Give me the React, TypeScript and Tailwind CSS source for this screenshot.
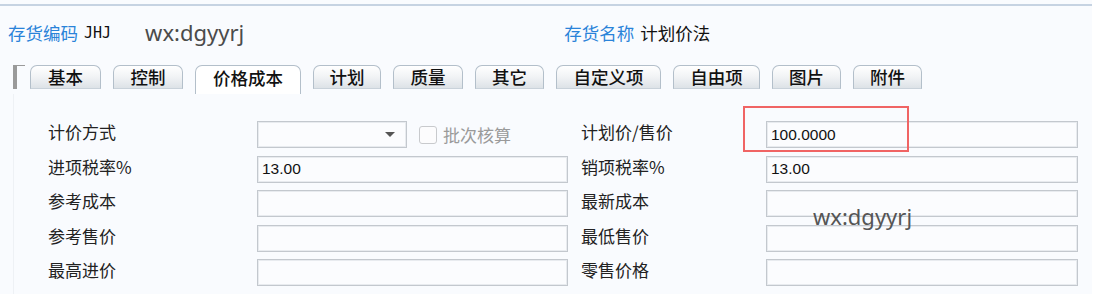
const tabs = [
  { name: '基本', w: 71 },
  { name: '控制', w: 70 },
  { name: '价格成本', w: 106, active: true },
  { name: '计划', w: 68 },
  { name: '质量', w: 70 },
  { name: '其它', w: 69 },
  { name: '自定义项', w: 105 },
  { name: '自由项', w: 87 },
  { name: '图片', w: 69 },
  { name: '附件', w: 69 },
];

const rows = [
  { left: '计价方式', right: '计划价/售价', rightValue: '100.0000', combo: true },
  { left: '进项税率%', leftValue: '13.00', right: '销项税率%', rightValue: '13.00' },
  { left: '参考成本', right: '最新成本' },
  { left: '参考售价', right: '最低售价' },
  { left: '最高进价', right: '零售价格' },
];

const cjk = "font-['Noto_Sans_CJK_SC','Noto_Sans',sans-serif]";

function Field({ value, width }: { value?: string; width: string }) {
  return (
    <div
      className={`${width} h-[27px] flex items-center px-[4px] border border-[#c3c8ce] bg-[#fbfcfe] shadow-[inset_0_0_0_1px_#e8ebef] text-[15.5px] text-[#111] font-['Liberation_Sans',sans-serif]`}
    >
      {value}
    </div>
  );
}

export default function App() {
  return (
    <div className={`w-[1094px] h-[294px] bg-white flex overflow-hidden ${cjk}`}>
      <div className="relative w-[1092px] h-full bg-[#f9fbfe] pt-[4px]">
        {/* top rule */}
        <div className="h-[2px] bg-[#c6d3e2]" />

        {/* Header */}
        <div className="flex items-center h-[24px] mt-[15px] text-[17.5px] leading-none">
          <span className="ml-[8px] text-[#2a83d9]">存货编码</span>
          <span className="ml-[6px] text-[15px] text-[#111] font-['DejaVu_Sans_Mono',monospace] tracking-[0px]">JHJ</span>
          <span className="ml-[34px] -mt-[3px] text-[22px] text-[#4b4b4b] font-['Noto_Sans',sans-serif]">wx:dgyyrj</span>
          <span className="ml-[320px] text-[#2a83d9]">存货名称</span>
          <span className="ml-[6px] text-[#111]">计划价法</span>
        </div>

        {/* Tabs */}
        <div className="flex items-end h-[29px] mt-[20px] pl-[13px]">
          <div className="self-start w-[12px] h-[24px] border-l-[4px] border-t border-[#9a9a9a] mr-[5px]" />
          <div className="flex items-end gap-[12px]">
            {tabs.map((t) => (
              <div
                key={t.name}
                style={{ width: t.w }}
                className={
                  t.active
                    ? 'h-[29px] pb-[4px] flex items-center justify-center rounded-t-[7px] border border-b-0 border-[#b3bfca] bg-white text-[17.5px] font-medium text-[#111]'
                    : 'h-[24px] mb-[5px] flex items-center justify-center rounded-t-[7px] border border-[#b3bfca] border-b-[#c9d2da] bg-gradient-to-b from-white via-[#f1f3f5] to-[#dde2e7] text-[17.5px] font-medium text-[#111]'
                }
              >
                {t.name}
              </div>
            ))}
          </div>
        </div>

        {/* Form panel */}
        <div className="ml-[13px] border-l border-[#eef1f5] pt-[27px] h-[200px]">
          <div className="flex flex-col gap-[7.5px]">
            {rows.map((r) => (
              <div key={r.left} className="flex items-center h-[27px] text-[17px] text-[#222]">
                <span className="w-[243px] pl-[34px] mb-[5px]">{r.left}</span>
                {r.combo ? (
                  <div className="w-[311px] flex items-center">
                    <div className="w-[150px] h-[27px] flex items-center justify-end pr-[11px] border border-[#c3c8ce] bg-[#fbfcfe] shadow-[inset_0_0_0_1px_#e8ebef]">
                      <div className="w-0 h-0 border-l-[5px] border-r-[5px] border-t-[5px] border-l-transparent border-r-transparent border-t-[#555]" />
                    </div>
                    <div className="ml-[12px] w-[18px] h-[18px] rounded-[3px] border border-[#c8cacd] bg-[#fcfcfd]" />
                    <span className="ml-[6px] text-[#9a9a9a]">批次核算</span>
                  </div>
                ) : (
                  <Field value={r.leftValue} width="w-[311px]" />
                )}
                <span className="ml-[13px] w-[185px] mb-[5px]">{r.right}</span>
                <Field value={r.rightValue} width="w-[312px]" />
              </div>
            ))}
          </div>
        </div>

        {/* annotation box */}
        <div className="absolute left-[743px] top-[106px] w-[166px] h-[46px] border-2 border-[#f06464]" />
        {/* watermark */}
        <span className="absolute left-[813px] top-[200px] text-[22px] text-[#555] font-['Noto_Sans',sans-serif]">
          wx:dgyyrj
        </span>
      </div>
    </div>
  );
}
